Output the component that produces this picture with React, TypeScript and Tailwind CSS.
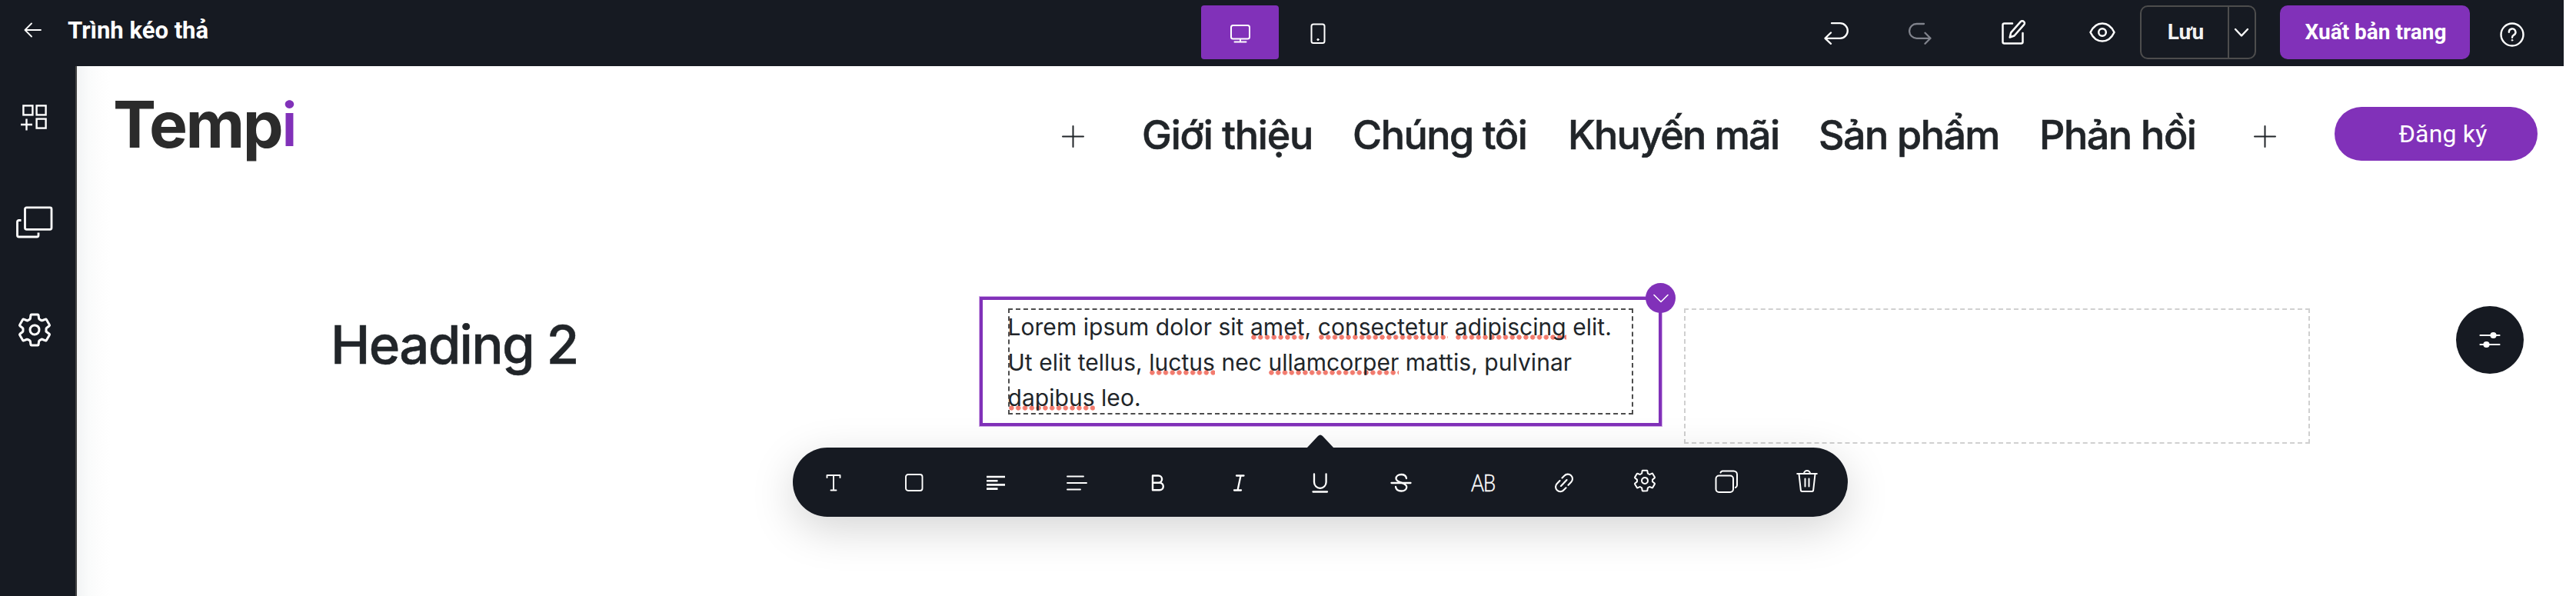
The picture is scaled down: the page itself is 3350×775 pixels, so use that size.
import type { ReactNode } from "react";
import { IoSettingsOutline } from "react-icons/io5";

type IconProps = { w: number; h: number; sw?: number; className?: string; children: ReactNode };

function Icon({ w, h, sw = 2, className = "", children }: IconProps) {
  return (
    <svg
      width={w}
      height={h}
      viewBox={`0 0 ${w} ${h}`}
      fill="none"
      stroke="currentColor"
      strokeWidth={sw}
      strokeLinecap="round"
      strokeLinejoin="round"
      className={`block shrink-0 ${className}`}
    >
      {children}
    </svg>
  );
}

function TopBar() {
  return (
    <header className="flex h-[86px] w-[3334px] items-start bg-[#161a22] pt-[7px] text-white">
      <div className="flex h-[66px] w-[1562px] items-center">
        <Icon w={24} h={20} sw={1.8} className="ml-[31px] mt-[-3px]">
          <path d="M22 10H2M10 1.5L1.5 10l8.500 8.500" />
        </Icon>
        <span className="ml-[33px] mt-[-1px] text-[31px] font-bold leading-none">Trình kéo thả</span>
      </div>

      <button className="flex h-[70px] w-[101px] items-center justify-center rounded-[4px] bg-[#8131b9]">
        <Icon w={28} h={26} className="mt-1">
          <rect x="2" y="2" width="24" height="17.500" rx="2.500" />
          <path d="M14 20v3M6.500 23.500h15" />
        </Icon>
      </button>
      <button className="ml-[40px] flex h-[70px] w-[22px] items-center justify-center">
        <Icon w={20} h={28} className="mt-1">
          <rect x="1.500" y="1.500" width="17" height="24.500" rx="2.500" />
          <circle cx="10" cy="21.500" r="1.200" fill="currentColor" strokeWidth="0.800" />
        </Icon>
      </button>

      <div className="ml-auto flex h-[70px] items-center">
        <Icon w={33} h={30} sw={2.3} className="mr-[78px] mt-[2px]">
          <path d="M11 2.200h11a9.800 9.800 0 0 1 0 19.600H3M10 14.500L2.500 21.800l7.500 7" />
        </Icon>
        <Icon w={31} h={30} sw={2.3} className="mr-[89px] mt-[2px] text-[#80838c]">
          <path d="M20 3h-9.500a9.400 9.400 0 0 0 0 18.800H28M21.500 14.800l7 7-7 7" />
        </Icon>
        <Icon w={34} h={34} sw={2.5} className="mr-[80px]">
          <path d="M15 5.500H4.500a2 2 0 0 0-2 2V29.500a2 2 0 0 0 2 2H26.500a2 2 0 0 0 2-2V18" />
          <path d="M25.800 3.200a2.900 2.900 0 0 1 4.300 4L17.500 21.500l-5.800 2 1.500-6.200z" />
        </Icon>
        <Icon w={36} h={28} sw={2.5} className="mr-[31px]">
          <path d="M2.500 14C6 6.500 11.500 2.500 18 2.500S30 6.500 33.500 14C30 21.500 24.500 25.500 18 25.500S6 21.500 2.500 14z" />
          <circle cx="18" cy="14" r="4.800" />
        </Icon>
        <div className="flex h-[70px] w-[151px] rounded-[10px] border-2 border-[#4d4d4d]">
          <button className="flex w-[112px] items-center justify-center pl-[3px] text-[28px] font-bold leading-none text-[#f2f2f2]">
            Lưu
          </button>
          <button className="flex flex-1 items-center justify-center border-l-2 border-[#4d4d4d]">
            <Icon w={20} h={13} sw={2.4} className="mr-[2px]">
              <path d="M2 2l8 8.500L18 2" />
            </Icon>
          </button>
        </div>
        <button className="ml-[31px] flex h-[70px] w-[247px] items-center justify-center rounded-[10px] bg-[#8131b9] pl-[2px] text-[28px] font-bold leading-none">
          Xuất bản trang
        </button>
        <Icon w={34} h={34} sw={2.4} className="ml-[38px] mr-[50px] mt-[5px]">
          <circle cx="17" cy="17" r="14.500" />
          <path d="M12.800 13.800a4.300 4.300 0 1 1 6.500 3.600c-1.600 1-2.300 1.600-2.300 3.300" />
          <circle cx="17" cy="24.300" r="0.900" fill="currentColor" strokeWidth="0.800" />
        </Icon>
      </div>
    </header>
  );
}

function SideBar() {
  return (
    <aside className="flex h-full w-[100px] shrink-0 flex-col border-r-2 border-[#444444] bg-[#161a22] text-white">
      <svg width="34" height="34" viewBox="0 0 34 34" fill="none" stroke="currentColor" strokeWidth="2.4" className="ml-[27px] mt-[50px] block">
        <rect x="3.400" y="1.400" width="12" height="12" />
        <rect x="20.600" y="1.400" width="12" height="12" />
        <rect x="20.600" y="18.600" width="12" height="12" />
        <path d="M7.500 18.500v15M0 26h15" />
      </svg>
      <Icon w={48} h={42} sw={2.8} className="ml-[21px] mt-[98px]">
        <rect x="11.500" y="1.800" width="34.500" height="28.500" rx="2" />
        <path d="M6.500 18.500h-3a2 2 0 0 0-2 2V38a2 2 0 0 0 2 2H27a2 2 0 0 0 2-2V34.500" strokeLinecap="butt" />
      </Icon>
      <IoSettingsOutline size={48} className="ml-[21px] mt-[95px] block" />
    </aside>
  );
}

const NAV = [
  { label: "Giới thiệu", width: "w-[274px] tracking-[-1.2px]" },
  { label: "Chúng tôi", width: "w-[280px] tracking-[-1.5px]" },
  { label: "Khuyến mãi", width: "w-[326px] tracking-[-1.75px]" },
  { label: "Sản phẩm", width: "w-[287px] tracking-[-1.55px]" },
  { label: "Phản hồi", width: "w-[279px] tracking-[-1.45px]" },
];

function Plus({ className = "" }: { className?: string }) {
  return (
    <Icon w={29} h={29} sw={2} className={className}>
      <path d="M14.500 1v27M1 14.500h27" />
    </Icon>
  );
}

function SiteHeader() {
  return (
    <div className="flex h-[299px] items-start font-['Inter',sans-serif] text-[#212529]">
      <div className="ml-[47px] mt-[34px] w-[1234px] text-[84px] font-bold leading-[84px] tracking-[-2.500px] text-[#2b2b2b]">
        Temp<span className="relative top-[-2px] text-[78px] font-semibold text-[#8131b9]">i</span>
      </div>
      <Plus className="mt-[77px]" />
      <nav className="ml-[75px] mt-[64px] flex text-[52px] font-medium leading-[52px] [-webkit-text-stroke:0.6px_#212529]">
        {NAV.map((n) => (
          <span key={n.label} className={`shrink-0 whitespace-nowrap ${n.width}`}>
            {n.label}
          </span>
        ))}
      </nav>
      <Plus className="mt-[77px]" />
      <button className="ml-[76px] mt-[53px] flex h-[70px] w-[264px] items-center justify-center rounded-full bg-[#8131b9] pl-[18px] font-['Roboto',sans-serif] text-[32px] tracking-[0.2px] text-white">
        Đăng ký
      </button>
    </div>
  );
}

function Misspelt({ children }: { children: string }) {
  return (
    <span className="bg-[radial-gradient(circle_at_center,#f27b6e_2.800px,transparent_3.500px)] bg-[length:8.8px_7px] bg-[position:0_28px] bg-repeat-x">
      {children}
    </span>
  );
}

function SelectedText() {
  return (
    <div className="relative ml-[404px] h-[170px] w-[889px] border border-[#cfa9e6] font-['Inter',sans-serif]">
      <div className="h-full border-4 border-[#8131b9] px-[33px] pt-[11px]">
        <div className="relative h-[138px] w-[813px] pt-px text-[30px] leading-[46px] tracking-[0.04px] text-[#212529]">
          <p className="ml-[-0.5px] whitespace-nowrap">
            Lorem ipsum dolor sit <Misspelt>amet</Misspelt>, <Misspelt>consectetur</Misspelt>{" "}
            <Misspelt>adipiscing</Misspelt> elit.
            <br />
            Ut elit tellus, <Misspelt>luctus</Misspelt> nec <Misspelt>ullamcorper</Misspelt> mattis, pulvinar
            <br />
            <Misspelt>dapibus</Misspelt> leo.
          </p>
          <div className="absolute inset-0 border-2 border-dashed border-[#4d4d4d]" />
        </div>
      </div>
      <div className="absolute right-[-18px] top-[-18px] flex size-[39px] items-center justify-center rounded-full bg-[#8131b9] text-white">
        <Icon w={20} h={12} sw={1.6}>
          <path d="M1 1.500l9 9 9-9" />
        </Icon>
      </div>
    </div>
  );
}

function Tool({ children }: { children: ReactNode }) {
  return <button className="flex h-full flex-1 items-center justify-center">{children}</button>;
}

function ToolBar() {
  return (
    <div className="absolute left-[1031px] top-[582px] flex h-[90px] w-[1372px] rounded-[45px] bg-[#161a22] text-white shadow-[0_16px_56px_rgba(0,0,0,0.17)]">
      <svg width="36" height="18" viewBox="0 0 36 18" className="absolute left-[668px] top-[-17px] block">
        <path d="M0 18L15 2q3-3 6 0L36 18z" fill="#161a22" />
      </svg>
      <Tool>
        <Icon w={20} h={24} sw={1.9} className="mt-[2px]">
          <path d="M1.500 5V2h17v3M10 2v19.500M6.500 21.500h7" />
        </Icon>
      </Tool>
      <Tool>
        <Icon w={26} h={26} sw={1.9} className="mt-[2px]">
          <rect x="2" y="2" width="21.500" height="21" rx="3" />
        </Icon>
      </Tool>
      <Tool>
        <Icon w={24} h={22} sw={2.6} className="mt-[2px]">
          <path strokeLinecap="butt" d="M0 3h24M0 8.200h14.500M0 13.400h24M0 18.600h14.500" />
        </Icon>
      </Tool>
      <Tool>
        <Icon w={28} h={22} sw={1.9} className="mt-[2px]">
          <path d="M2 2.500h21M2 11h25M2 19.500h17" />
        </Icon>
      </Tool>
      <Tool>
        <Icon w={18} h={24} sw={2.4} className="mt-[2px]">
          <path d="M2 2.500h7.500a4.600 4.600 0 0 1 0 9.200H2zM2 11.700h9a4.800 4.800 0 0 1 0 9.600H2z" />
        </Icon>
      </Tool>
      <Tool>
        <Icon w={18} h={24} sw={2.3} className="mt-[2px]">
          <path d="M6 2.500h9.500M3 21.500h9M11.500 2.500l-4 19" />
        </Icon>
      </Tool>
      <Tool>
        <Icon w={22} h={26} sw={2.3} className="mt-[2px]">
          <path d="M3 1.500V12a7.800 7.800 0 0 0 15.600 0V1.500M1.500 24.500h18.500" />
        </Icon>
      </Tool>
      <Tool>
        <Icon w={28} h={26} sw={2.3} className="mt-[2px]">
          <path d="M21 7c-.5-3-3-5-6.700-5C10.500 2 7.500 4 7.500 7.200c0 6 13.800 5 13.800 11 0 3.200-3 5.300-7 5.300-4.200 0-6.800-2.200-7.300-5.500" />
          <path d="M1.500 13h25" />
        </Icon>
      </Tool>
      <Tool>
        <span className="inline-block scale-x-[0.84] font-['Lato',sans-serif] text-[31px] font-light leading-none tracking-[-1.5px] [-webkit-text-stroke:0.5px_#ffffff]">
          AB
        </span>
      </Tool>
      <Tool>
        <Icon w={26} h={26} sw={2.1} className="mt-[2px]">
          <path d="M10.500 6.500l3-3a5.900 5.900 0 0 1 8.800 8.300l-3.800 4M15.500 19.300l-3 3A5.900 5.900 0 0 1 3.700 14l3.800-4M9 17l7.500-8" />
        </Icon>
      </Tool>
      <Tool>
        <IoSettingsOutline size={32} className="mt-[-4px] block" />
      </Tool>
      <Tool>
        <Icon w={30} h={30} sw={2} className="mt-[-3px]">
          <rect x="1.500" y="7.500" width="22.500" height="21.500" rx="4" />
          <path d="M7.500 3.500a3.500 3.500 0 0 1 2.500-2H24.500a4.500 4.500 0 0 1 4.500 4.500v14a3.500 3.500 0 0 1-2 3" />
        </Icon>
      </Tool>
      <Tool>
        <Icon w={28} h={30} sw={2} className="mt-[-4px]">
          <path d="M1.200 6h25.600M10 6a4 4 0 0 1 8 0M3.500 6.500L5.800 27a2 2 0 0 0 2 2h12.400a2 2 0 0 0 2-2L24.500 6.500M11.500 12.500v10M16.500 12.500v10" />
        </Icon>
      </Tool>
    </div>
  );
}

export default function App() {
  return (
    <div className="relative h-[775px] w-[3350px] overflow-hidden bg-white font-['Roboto',sans-serif]">
      <TopBar />
      <div className="flex h-[689px]">
        <SideBar />
        <main className="h-full flex-1 bg-[linear-gradient(to_right,#f2f4f5_0px,#fafbfb_16px,#fdfdfd_28px,#ffffff_44px)]">
          <SiteHeader />
          <div className="flex items-start">
            <h2 className="ml-[330px] mt-[28px] w-[439px] whitespace-nowrap font-['Inter',sans-serif] text-[69px] font-medium leading-[70px] tracking-[-1.7px] text-[#212529] [-webkit-text-stroke:0.5px_#212529]">
              Heading 2
            </h2>
            <SelectedText />
            <div className="ml-[28px] mt-[16px] h-[176px] w-[814px] border-2 border-dashed border-[#d0d0d0]" />
            <button className="ml-[190px] mt-[13px] flex size-[88px] items-center justify-center rounded-full bg-[#161a22] text-white">
              <Icon w={28} h={22} sw={2.2}>
                <path d="M1.500 5h25M1.500 17h25" />
                <circle cx="18.500" cy="5" r="3" fill="currentColor" />
                <circle cx="9.500" cy="17" r="3" fill="currentColor" />
              </Icon>
            </button>
          </div>
        </main>
      </div>
      <ToolBar />
    </div>
  );
}
